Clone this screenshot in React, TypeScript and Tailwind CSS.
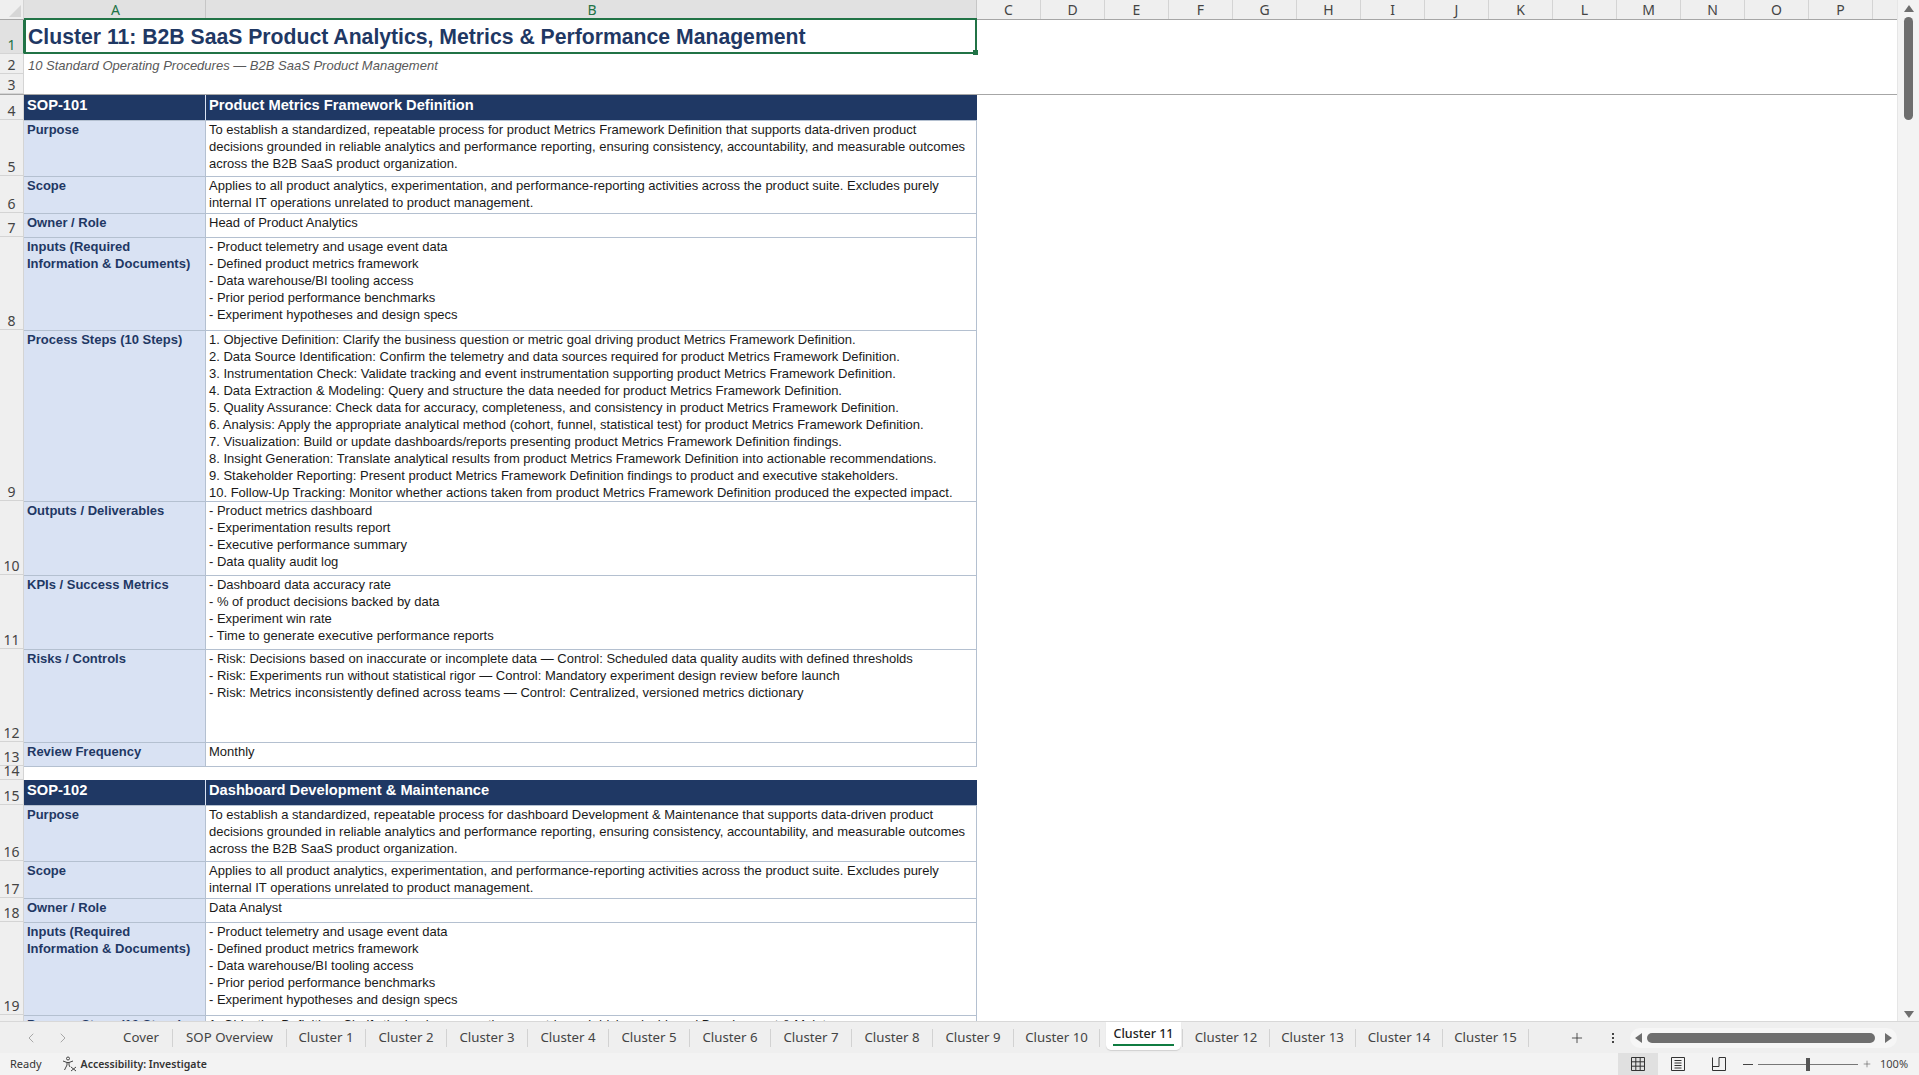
import { ChevronLeft, ChevronRight, Plus } from 'lucide-react'

type SopRow = { num: number; h: string; label: string; lines: string[] }

const colLetters = ['C', 'D', 'E', 'F', 'G', 'H', 'I', 'J', 'K', 'L', 'M', 'N', 'O', 'P']

const inputs = [
  '- Product telemetry and usage event data',
  '- Defined product metrics framework',
  '- Data warehouse/BI tooling access',
  '- Prior period performance benchmarks',
  '- Experiment hypotheses and design specs',
]

function purpose(name: string) {
  return [
    `To establish a standardized, repeatable process for ${name} that supports data-driven product`,
    'decisions grounded in reliable analytics and performance reporting, ensuring consistency, accountability, and measurable outcomes',
    'across the B2B SaaS product organization.',
  ]
}

const scope = [
  'Applies to all product analytics, experimentation, and performance-reporting activities across the product suite. Excludes purely',
  'internal IT operations unrelated to product management.',
]

const first: SopRow[] = [
  { num: 5, h: 'h-[56px]', label: 'Purpose', lines: purpose('product Metrics Framework Definition') },
  { num: 6, h: 'h-[37px]', label: 'Scope', lines: scope },
  { num: 7, h: 'h-[24px]', label: 'Owner / Role', lines: ['Head of Product Analytics'] },
  { num: 8, h: 'h-[93px]', label: 'Inputs (Required Information & Documents)', lines: inputs },
  {
    num: 9,
    h: 'h-[171px]',
    label: 'Process Steps (10 Steps)',
    lines: [
      '1. Objective Definition: Clarify the business question or metric goal driving product Metrics Framework Definition.',
      '2. Data Source Identification: Confirm the telemetry and data sources required for product Metrics Framework Definition.',
      '3. Instrumentation Check: Validate tracking and event instrumentation supporting product Metrics Framework Definition.',
      '4. Data Extraction & Modeling: Query and structure the data needed for product Metrics Framework Definition.',
      '5. Quality Assurance: Check data for accuracy, completeness, and consistency in product Metrics Framework Definition.',
      '6. Analysis: Apply the appropriate analytical method (cohort, funnel, statistical test) for product Metrics Framework Definition.',
      '7. Visualization: Build or update dashboards/reports presenting product Metrics Framework Definition findings.',
      '8. Insight Generation: Translate analytical results from product Metrics Framework Definition into actionable recommendations.',
      '9. Stakeholder Reporting: Present product Metrics Framework Definition findings to product and executive stakeholders.',
      '10. Follow-Up Tracking: Monitor whether actions taken from product Metrics Framework Definition produced the expected impact.',
    ],
  },
  {
    num: 10,
    h: 'h-[74px]',
    label: 'Outputs / Deliverables',
    lines: ['- Product metrics dashboard', '- Experimentation results report', '- Executive performance summary', '- Data quality audit log'],
  },
  {
    num: 11,
    h: 'h-[74px]',
    label: 'KPIs / Success Metrics',
    lines: ['- Dashboard data accuracy rate', '- % of product decisions backed by data', '- Experiment win rate', '- Time to generate executive performance reports'],
  },
  {
    num: 12,
    h: 'h-[93px]',
    label: 'Risks / Controls',
    lines: [
      '- Risk: Decisions based on inaccurate or incomplete data — Control: Scheduled data quality audits with defined thresholds',
      '- Risk: Experiments run without statistical rigor — Control: Mandatory experiment design review before launch',
      '- Risk: Metrics inconsistently defined across teams — Control: Centralized, versioned metrics dictionary',
    ],
  },
  { num: 13, h: 'h-[24px]', label: 'Review Frequency', lines: ['Monthly'] },
]

const second: SopRow[] = [
  { num: 16, h: 'h-[56px]', label: 'Purpose', lines: purpose('dashboard Development & Maintenance') },
  { num: 17, h: 'h-[37px]', label: 'Scope', lines: scope },
  { num: 18, h: 'h-[24px]', label: 'Owner / Role', lines: ['Data Analyst'] },
  { num: 19, h: 'h-[93px]', label: 'Inputs (Required Information & Documents)', lines: inputs },
  {
    num: 20,
    h: 'h-[171px]',
    label: 'Process Steps (10 Steps)',
    lines: ['1. Objective Definition: Clarify the business question or metric goal driving dashboard Development & Maintenance.'],
  },
]

const tabs = [
  { name: 'Cover', w: 'w-[63px]' },
  { name: 'SOP Overview', w: 'w-[114px]' },
  { name: 'Cluster 1', w: 'w-[79px]' },
  { name: 'Cluster 2', w: 'w-[81px]' },
  { name: 'Cluster 3', w: 'w-[81px]' },
  { name: 'Cluster 4', w: 'w-[81px]' },
  { name: 'Cluster 5', w: 'w-[81px]' },
  { name: 'Cluster 6', w: 'w-[81px]' },
  { name: 'Cluster 7', w: 'w-[81px]' },
  { name: 'Cluster 8', w: 'w-[81px]' },
  { name: 'Cluster 9', w: 'w-[81px]' },
  { name: 'Cluster 10', w: 'w-[86px]' },
]

const tabsAfter = [
  { name: 'Cluster 12', w: 'w-[87px]' },
  { name: 'Cluster 13', w: 'w-[86px]' },
  { name: 'Cluster 14', w: 'w-[87px]' },
  { name: 'Cluster 15', w: 'w-[86px]' },
]

function RowNum({ n, h, active }: { n?: number; h: string; active?: boolean }) {
  return (
    <div
      className={`${h} w-[24px] shrink-0 flex items-end justify-center border-b border-r border-[#d4d4d4] text-[14px] leading-[17px] font-['Noto_Sans',sans-serif] ${
        active ? 'bg-[#e1e1e1] text-[#217346] border-r-[#217346]' : 'bg-[#efefef] text-[#444444]'
      }`}
    >
      {n}
    </div>
  )
}

function Row({ row }: { row: SopRow }) {
  return (
    <div className="flex">
      <RowNum n={row.num} h={row.h} />
      <div className={`${row.h} w-[182px] shrink-0 bg-[#d9e2f3] border-t border-r border-[#b4c0d0] pl-[3px] pr-1 font-bold text-[#1f3864]`}>
        {row.label}
      </div>
      <div className={`${row.h} w-[771px] shrink-0 bg-white border-t border-r border-[#b4c0d0] pl-[3px] overflow-hidden text-[#1a1a1a]`}>
        {row.lines.map((line) => (
          <div key={line} className="whitespace-nowrap">
            {line}
          </div>
        ))}
      </div>
    </div>
  )
}

function HeadRow({ num, id, title }: { num: number; id: string; title: string }) {
  return (
    <div className="flex">
      <RowNum n={num} h="h-[25px]" />
      <div className="h-[25px] w-[182px] shrink-0 bg-[#1f3864] border-r border-[#d9e2f3] pl-[3px] font-bold text-white text-[14.67px] leading-[20px]">{id}</div>
      <div className="h-[25px] w-[771px] shrink-0 bg-[#1f3864] pl-[3px] font-bold text-white text-[14.67px] leading-[20px]">{title}</div>
    </div>
  )
}

function Tab({ name, w }: { name: string; w: string }) {
  return (
    <div className={`${w} h-[18px] shrink-0 flex items-center justify-center border-r border-[#d2d2d2] whitespace-nowrap`}>{name}</div>
  )
}

export default function App() {
  return (
    <div className="h-[1075px] w-[1919px] flex flex-col overflow-hidden bg-white font-['Liberation_Sans',Arial,sans-serif] text-[13px] leading-[17px]">
      <div className="flex flex-1 min-h-0">
        <div className="flex-1 min-w-0 flex flex-col">
          {/* column headers */}
          <div className="h-[20px] shrink-0 flex text-[14px] leading-[19px] font-['Noto_Sans',sans-serif] border-b border-[#a6a6a6]">
            <div className="w-[24px] shrink-0 bg-[#efefef] border-r border-[#d4d4d4] flex items-end justify-end p-[2px]">
              <div className="w-0 h-0 border-l-[12px] border-l-transparent border-b-[12px] border-b-[#d6d6d6]" />
            </div>
            <div className="w-[182px] shrink-0 bg-[#e1e1e1] border-r border-[#c6c6c6] pl-[2px] text-center text-[#217346]">A</div>
            <div className="w-[771px] shrink-0 bg-[#e1e1e1] border-r border-[#c6c6c6] pl-[2px] text-center text-[#217346]">B</div>
            {colLetters.map((c) => (
              <div key={c} className="w-[64px] shrink-0 bg-[#efefef] border-r border-[#d4d4d4] text-center text-[#444444]">
                {c}
              </div>
            ))}
            <div className="flex-1 bg-[#efefef]" />
          </div>

          {/* frozen rows */}
          <div className="shrink-0 border-b border-[#a6a6a6]">
            <div className="flex">
              <RowNum n={1} h="h-[34px]" active />
              <div className="relative -mt-[2px] h-[36px] w-[953px] shrink-0 border-2 border-[#217346] bg-white pl-[2px] pt-[1px] flex items-center font-bold text-[21.2px] text-[#1f3864] whitespace-nowrap">
                Cluster 11: B2B SaaS Product Analytics, Metrics &amp; Performance Management
                <div className="absolute -right-[3px] -bottom-[3px] w-[5px] h-[5px] bg-[#217346]" />
              </div>
            </div>
            <div className="flex">
              <RowNum n={2} h="h-[20px]" />
              <div className="pl-[4px] pt-[3px] italic text-[#595959] whitespace-nowrap">10 Standard Operating Procedures — B2B SaaS Product Management</div>
            </div>
            <div className="flex">
              <RowNum n={3} h="h-[20px]" />
            </div>
          </div>

          {/* scrolling rows */}
          <div className="flex-1 min-h-0 overflow-hidden">
            <HeadRow num={4} id="SOP-101" title="Product Metrics Framework Definition" />
            {first.map((row) => (
              <Row key={row.num} row={row} />
            ))}
            <div className="flex">
              <RowNum n={14} h="h-[14px]" />
              <div className="h-[14px] w-[953px] shrink-0 border-t border-[#b4c0d0]" />
            </div>
            <HeadRow num={15} id="SOP-102" title="Dashboard Development & Maintenance" />
            {second.map((row) => (
              <Row key={row.num} row={row} />
            ))}
          </div>
        </div>

        {/* vertical scrollbar */}
        <div className="w-[22px] shrink-0 bg-[#f3f3f3] border-l border-[#e6e6e6] flex flex-col items-center pt-[5px] pb-[3px]">
          <div className="w-0 h-0 border-x-[5px] border-x-transparent border-b-[7px] border-b-[#6e6e6e]" />
          <div className="w-[9px] h-[103px] mt-[5px] rounded-full bg-[#6e6e6e]" />
          <div className="flex-1" />
          <div className="w-0 h-0 border-x-[5px] border-x-transparent border-t-[7px] border-t-[#6e6e6e]" />
        </div>
      </div>

      {/* sheet tabs */}
      <div className="h-[32px] shrink-0 flex items-center bg-[#efefef] border-t border-[#d8d8d8] text-[13.25px] text-[#444444] font-['Noto_Sans',sans-serif]">
        <div className="w-[110px] shrink-0 flex items-center pl-[23px] gap-[16px] text-[#999999]">
          <ChevronLeft size={16} strokeWidth={1.25} />
          <ChevronRight size={16} strokeWidth={1.25} />
        </div>
        {tabs.map((t) => (
          <Tab key={t.name} name={t.name} w={t.w} />
        ))}
        <div className="w-[6px] shrink-0" />
        <div className="self-start h-[28px] w-[75px] shrink-0 bg-white rounded-b-[5px] shadow-[0_1px_1px_#d0d0d0] flex justify-center font-medium text-[12.5px] text-[#222222]">
          <span className="h-[24px] border-b-[2px] border-[#107c41] leading-[24px] whitespace-nowrap">Cluster 11</span>
        </div>
        <div className="w-[2px] h-[18px] shrink-0 border-r border-[#d2d2d2]" />
        {tabsAfter.map((t) => (
          <Tab key={t.name} name={t.name} w={t.w} />
        ))}
        <div className="w-[56px] shrink-0 flex justify-end">
          <Plus size={16} strokeWidth={1.25} className="text-[#333333]" />
        </div>
        <div className="w-[45px] shrink-0 pl-[27px]">
          <div className="flex flex-col gap-[2px]">
            <div className="w-[2px] h-[2px] bg-[#444444]" />
            <div className="w-[2px] h-[2px] bg-[#444444]" />
            <div className="w-[2px] h-[2px] bg-[#444444]" />
          </div>
        </div>
        <div className="w-[267px] h-[20px] shrink-0 rounded-full bg-[#f6f6f6] flex items-center px-[5px]">
          <div className="w-0 h-0 border-y-[5px] border-y-transparent border-r-[7px] border-r-[#6e6e6e]" />
          <div className="h-[10px] w-[228px] ml-[5px] rounded-full bg-[#6e6e6e]" />
          <div className="flex-1" />
          <div className="w-0 h-0 border-y-[5px] border-y-transparent border-l-[7px] border-l-[#6e6e6e]" />
        </div>
      </div>

      {/* status bar */}
      <div className="h-[22px] shrink-0 flex items-center bg-[#f3f3f3] text-[11px] leading-[22px] text-[#444444] font-['Noto_Sans',sans-serif]">
        <span className="ml-[10px] text-[#333333]">Ready</span>
        <svg className="ml-[19px]" width="16" height="16" viewBox="0 0 16 16" fill="none" stroke="#444444" strokeWidth="1">
          <circle cx="7" cy="2.5" r="1.5" />
          <path d="M2 5 L6 6.5 H8 L12 5 M6 6.5 V9 L3.5 14 M8 6.5 V9 L9 11" />
          <path d="M10 11 L15 15 M15 11 L10 15" />
        </svg>
        <span className="ml-[4px] font-semibold text-[10.5px] text-[#333333]">Accessibility: Investigate</span>
        <div className="flex-1" />
        <div className="w-[40px] h-[22px] bg-[#e0e0e0] flex items-center justify-center">
          <svg width="14" height="14" viewBox="0 0 14 14" fill="none" stroke="#333333" strokeWidth="1">
            <path d="M.5.5h13v13H.5zM.5 4.8h13M.5 9.2h13M4.8.5v13M9.2.5v13" />
          </svg>
        </div>
        <div className="w-[40px] flex justify-center">
          <svg width="14" height="14" viewBox="0 0 14 14" fill="none" stroke="#333333" strokeWidth="1">
            <path d="M.5.5h13v13H.5zM3.5 3.5h7M3.5 6h7M3.5 8.5h7M3.5 11h7" />
          </svg>
        </div>
        <div className="w-[41px] flex justify-center">
          <svg width="14" height="14" viewBox="0 0 14 14" fill="none" stroke="#333333" strokeWidth="1">
            <path d="M.5.5v13h13V.5M.5 9.5h6.5V.5h6.5" />
          </svg>
        </div>
        <div className="w-[10px] h-[1px] ml-[4px] bg-[#444444]" />
        <div className="w-[100px] h-[1px] ml-[5px] bg-[#777777] flex justify-center items-center">
          <div className="w-[4px] h-[13px] bg-[#555555]" />
        </div>
        <Plus size={10} strokeWidth={1.25} className="ml-[4px] text-[#444444]" />
        <span className="ml-[8px] mr-[8px] w-[31px]">100%</span>
      </div>
    </div>
  )
}
